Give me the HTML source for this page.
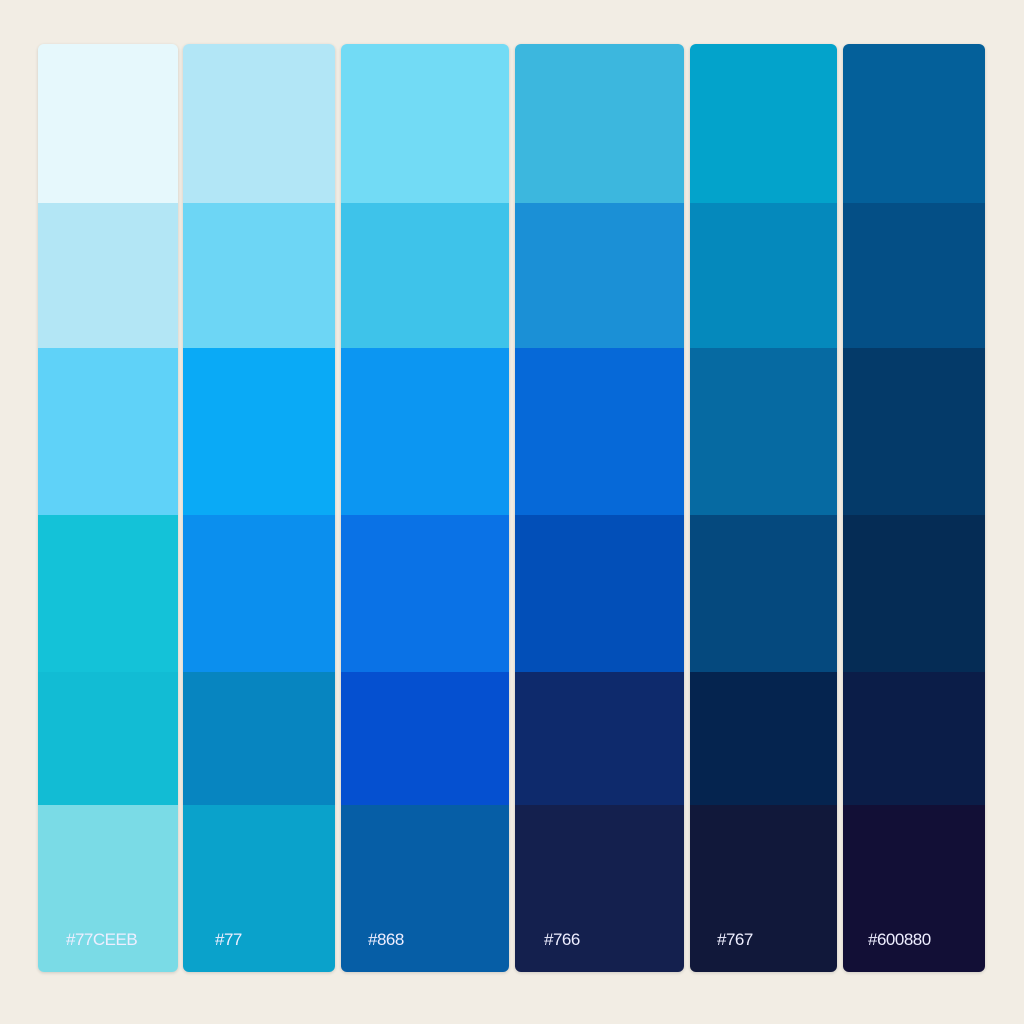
<!DOCTYPE html><html><head><style>
body{margin:0;width:1024px;height:1024px;background:#f2ede4;position:relative;overflow:hidden;font-family:"Liberation Sans",sans-serif}
.c{position:absolute;top:44px;height:928px;border-radius:6px;overflow:hidden;display:flex;flex-direction:column;box-shadow:0 1px 3px rgba(0,0,0,.15)}
.c div{width:100%}
.r1{height:159px}.r2{height:145px}.r3{height:167px}.r4{height:157px}.r5{height:133px}.r6{height:167px;position:relative}
.l{position:absolute;top:125px;color:#eef;font-size:17px;letter-spacing:-0.5px}
</style></head><body>
<div class="c" style="left:38px;width:140px"><div class="r1" style="background:#e6f8fc"></div><div class="r2" style="background:#b3e6f5"></div><div class="r3" style="background:#5fd2f8"></div><div class="r4" style="background:#14c2d8"></div><div class="r5" style="background:#12bcd4"></div><div class="r6" style="background:#7adbe6"><span class="l" style="left:28px">#77CEEB</span></div></div>
<div class="c" style="left:183px;width:152px"><div class="r1" style="background:#b2e6f6"></div><div class="r2" style="background:#6dd6f5"></div><div class="r3" style="background:#0aaaf6"></div><div class="r4" style="background:#0b8fee"></div><div class="r5" style="background:#0785c0"></div><div class="r6" style="background:#0aa2cb"><span class="l" style="left:32px">#77</span></div></div>
<div class="c" style="left:341px;width:168px"><div class="r1" style="background:#72dbf5"></div><div class="r2" style="background:#3ec3ea"></div><div class="r3" style="background:#0c96f2"></div><div class="r4" style="background:#0a72e6"></div><div class="r5" style="background:#0550d0"></div><div class="r6" style="background:#065ea6"><span class="l" style="left:27px">#868</span></div></div>
<div class="c" style="left:515px;width:169px"><div class="r1" style="background:#3cb7de"></div><div class="r2" style="background:#1b90d6"></div><div class="r3" style="background:#0669d8"></div><div class="r4" style="background:#024fb8"></div><div class="r5" style="background:#0e2a6c"></div><div class="r6" style="background:#14204e"><span class="l" style="left:29px">#766</span></div></div>
<div class="c" style="left:690px;width:147px"><div class="r1" style="background:#03a3cb"></div><div class="r2" style="background:#0589bc"></div><div class="r3" style="background:#066aa2"></div><div class="r4" style="background:#05497e"></div><div class="r5" style="background:#05244f"></div><div class="r6" style="background:#11183a"><span class="l" style="left:27px">#767</span></div></div>
<div class="c" style="left:843px;width:142px"><div class="r1" style="background:#04609a"></div><div class="r2" style="background:#044f86"></div><div class="r3" style="background:#043a69"></div><div class="r4" style="background:#052c55"></div><div class="r5" style="background:#0b1d48"></div><div class="r6" style="background:#120f36"><span class="l" style="left:25px">#600880</span></div></div>
</body></html>
